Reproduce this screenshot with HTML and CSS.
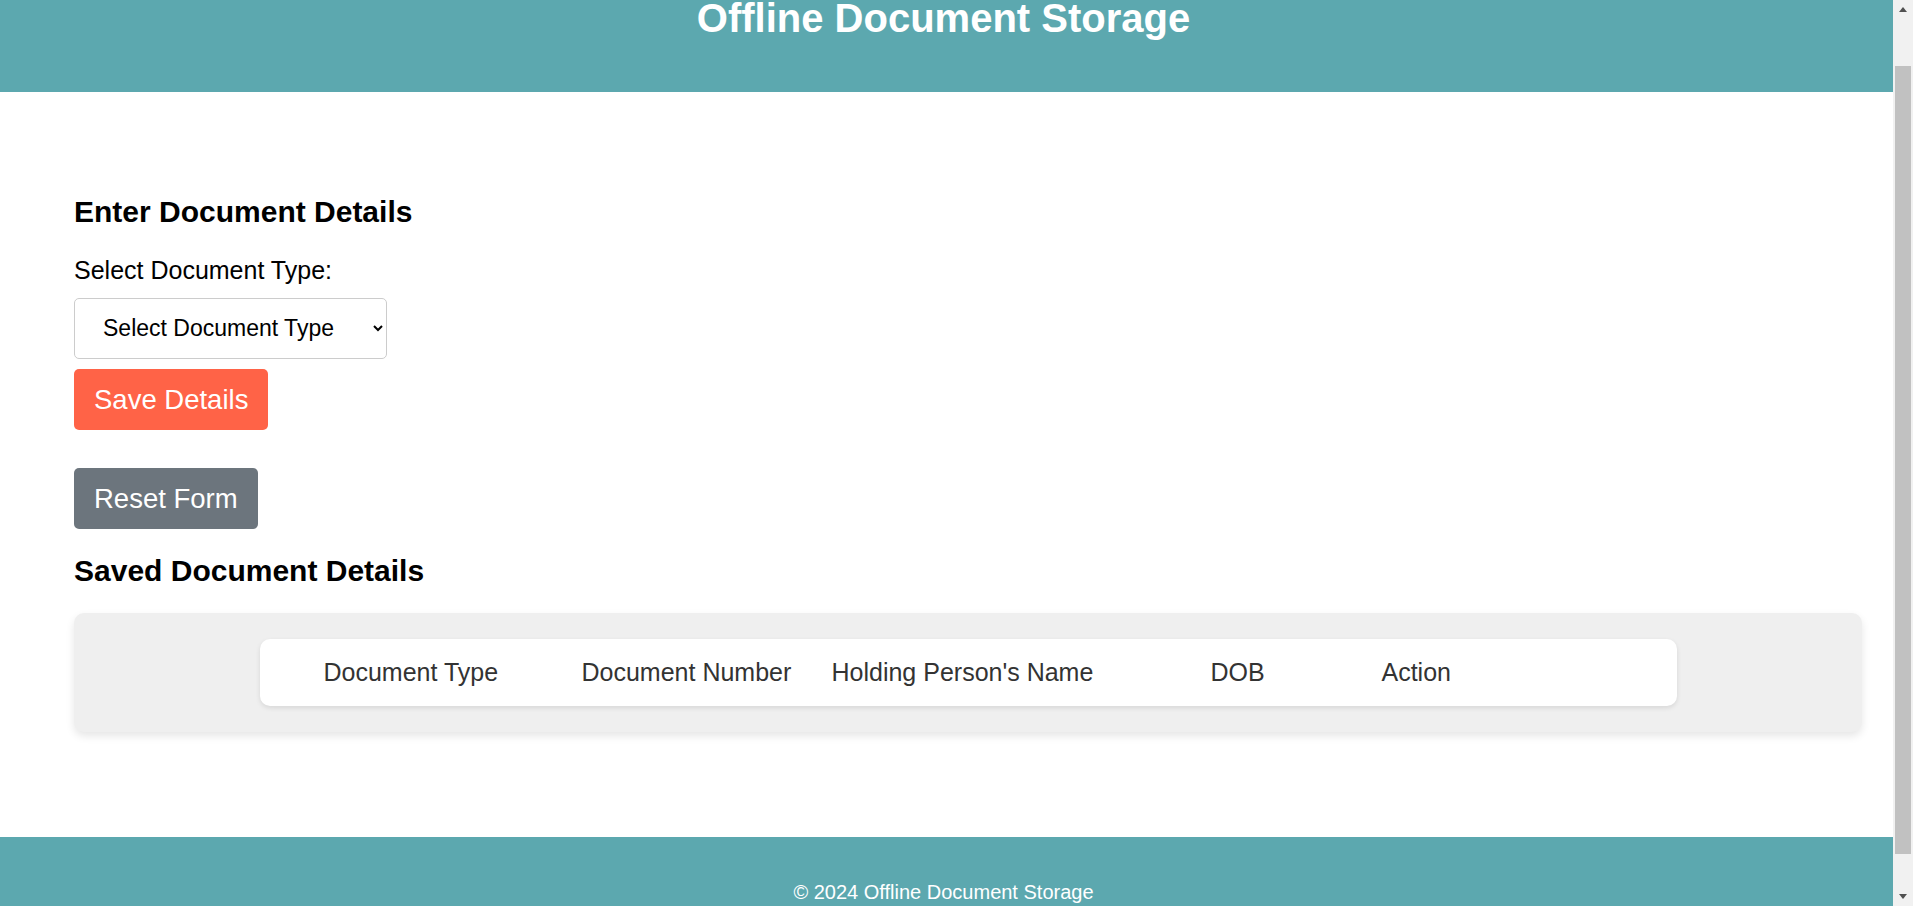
FILE: index.html
```html
<!DOCTYPE html>
<html lang="en">
<head>
<meta charset="utf-8">
<title>Offline Document Storage</title>
<link rel="stylesheet" href="styles.css">
</head>
<body>
<header class="site-header">
  <h1 class="site-title">Offline Document Storage</h1>
</header>
<main class="container">
  <section class="form-section">
    <h2 class="section-title">Enter Document Details</h2>
    <label class="field-label" for="docType">Select Document Type:</label>
    <select class="doc-select" id="docType">
      <option>Select Document Type</option>
      <option>Aadhaar Card</option>
      <option>PAN Card</option>
      <option>Passport</option>
    </select>
    <button class="btn btn-save" type="button">Save Details</button>
    <button class="btn btn-reset" type="button">Reset Form</button>
  </section>
  <section class="saved-section">
    <h2 class="section-title">Saved Document Details</h2>
    <div class="table-wrap">
      <table class="doc-table">
        <colgroup>
          <col class="c1"><col class="c2"><col class="c3"><col class="c4"><col class="c5">
        </colgroup>
        <thead>
          <tr>
            <th>Document Type</th>
            <th>Document Number</th>
            <th>Holding Person's Name</th>
            <th>DOB</th>
            <th>Action</th>
          </tr>
        </thead>
        <tbody></tbody>
      </table>
    </div>
  </section>
</main>
<footer class="site-footer">
  <p class="footer-text">© 2024 Offline Document Storage</p>
</footer>
<div class="fake-scrollbar" aria-hidden="true">
  <span class="sb-arrow sb-up"></span>
  <span class="sb-thumb"></span>
  <span class="sb-arrow sb-down"></span>
</div>
<script src="script.js"></script>
</body>
</html>
```
FILE: styles.css
```css
* { box-sizing: border-box; }
html { margin: 0; padding: 0; }
body {
  margin: 0 20px 0 0;
  padding: 0;
  font-family: "Liberation Sans", Arial, sans-serif;
  color: #000;
  background: #fff;
}
.site-header {
  background: #5ca8af;
  padding: 51px 6px 51px 0;
  text-align: center;
}
.site-title {
  margin: 0;
  color: #fff;
  font-size: 40px;
  line-height: 46px;
  font-weight: bold;
}
.container {
  padding: 103px 31px 105px 74px;
}
.form-section {
  display: flex;
  flex-direction: column;
  align-items: flex-start;
}
.section-title {
  margin: 0;
  font-size: 30px;
  line-height: 34.5px;
  font-weight: bold;
}
.field-label {
  margin-top: 26px;
  font-size: 25px;
  line-height: 29px;
}
.doc-select {
  margin-top: 13px;
  width: 313px;
  height: 61px;
  padding: 0 8px 0 24px;
  font-family: "Liberation Sans", Arial, sans-serif;
  font-size: 23px;
  color: #000;
  background: #fff;
  border: 1px solid #ccc;
  border-radius: 5px;
}
.btn {
  font-family: "Liberation Sans", Arial, sans-serif;
  font-size: 27.5px;
  line-height: 31px;
  padding: 15px 20px;
  color: #fff;
  border: none;
  border-radius: 5px;
}
.btn-save {
  margin-top: 10px;
  background: #ff6347;
}
.btn-reset {
  margin-top: 38px;
  background: #6c757d;
}
.saved-section {
  margin-top: 25px;
}
.table-wrap {
  margin-top: 25px;
  background: #efefef;
  border-radius: 10px;
  padding: 26px 0;
  box-shadow: 0 4px 8px rgba(0, 0, 0, 0.1);
}
.doc-table {
  width: 1417px;
  margin: 0 auto;
  table-layout: fixed;
  border-collapse: separate;
  border-spacing: 0;
  background: #fff;
  border-radius: 10px;
  box-shadow: 0 2px 5px rgba(0, 0, 0, 0.1);
}
.c1 { width: 322px; }
.c2 { width: 250px; }
.c3 { width: 379px; }
.c4 { width: 171px; }
.c5 { width: 295px; }
.doc-table th {
  padding: 19px 0;
  text-align: left;
  font-weight: normal;
  font-size: 25px;
  line-height: 29px;
  color: #333;
}
.doc-table th:first-child { padding-left: 64px; }
.site-footer {
  background: #5ca8af;
  height: 110px;
  padding-right: 6px;
  display: flex;
  align-items: center;
  justify-content: center;
}
.footer-text {
  margin: 0;
  color: #fff;
  font-size: 20px;
  line-height: 23px;
}
.fake-scrollbar {
  position: fixed;
  top: 0;
  right: 0;
  bottom: 0;
  width: 20px;
  background: #f1f1f1;
}
.sb-thumb {
  position: absolute;
  left: 2px;
  right: 2px;
  top: 66px;
  height: 788px;
  background: #c1c1c1;
}
.sb-arrow {
  position: absolute;
  left: 6px;
  width: 0;
  height: 0;
  border-left: 4.5px solid transparent;
  border-right: 4.5px solid transparent;
}
.sb-up {
  top: 7px;
  border-bottom: 5px solid #505050;
}
.sb-down {
  bottom: 7px;
  border-top: 5px solid #505050;
}
```
FILE: script.js
```js
window.scrollTo(0, 56);
window.addEventListener('load', function () { window.scrollTo(0, 56); });
```
